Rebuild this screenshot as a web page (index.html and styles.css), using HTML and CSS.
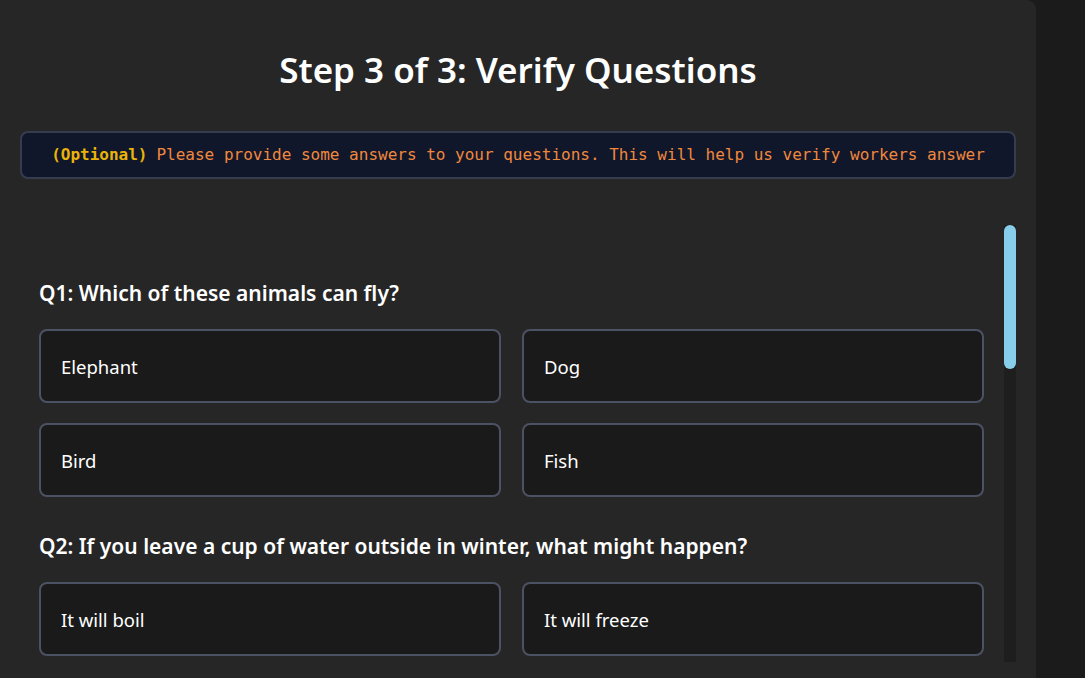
FILE: index.html
```html
<!DOCTYPE html>
<html lang="en">
<head>
<meta charset="utf-8">
<title>Verify Questions</title>
<link rel="stylesheet" href="styles.css">
</head>
<body>
<main class="card">
  <h1 class="title">Step 3 of 3: Verify Questions</h1>
  <div class="notice"><span class="notice-tag">(Optional)</span> Please provide some answers to your questions. This will help us verify workers answer</div>
  <div class="scroll-area">
    <div class="scroll-content">
      <section class="question">
        <h2 class="q-title">Q1: Which of these animals can fly?</h2>
        <div class="options">
          <button class="option">Elephant</button>
          <button class="option">Dog</button>
          <button class="option">Bird</button>
          <button class="option">Fish</button>
        </div>
      </section>
      <section class="question">
        <h2 class="q-title">Q2: If you leave a cup of water outside in winter, what might happen?</h2>
        <div class="options">
          <button class="option">It will boil</button>
          <button class="option">It will freeze</button>
        </div>
      </section>
    </div>
    <div class="scrollbar"><div class="thumb"></div></div>
  </div>
</main>
</body>
</html>
```
FILE: styles.css
```css
* { box-sizing: border-box; }
html, body { margin: 0; padding: 0; }
body {
  background: #1b1b1b;
  font-family: "Noto Sans", "Open Sans", sans-serif;
  color: #ffffff;
  height: 678px;
  overflow: hidden;
}
.card {
  width: 1036px;
  height: 678px;
  background: #262626;
  border-top-right-radius: 9px;
  padding: 48px 20px 0 20px;
  display: flex;
  flex-direction: column;
}
.title {
  margin: 0;
  text-align: center;
  font-size: 35px;
  line-height: 44px;
  font-weight: 600;
  color: #ffffff;
}
.notice {
  margin-top: 39px;
  height: 48px;
  border: 2px solid #343c4e;
  border-radius: 8px;
  background: #10172a;
  font-family: "DejaVu Sans Mono", "Liberation Mono", monospace;
  font-size: 16px;
  color: #f0883e;
  display: flex;
  align-items: center;
  justify-content: center;
  white-space: nowrap;
  overflow: hidden;
  padding-bottom: 1px;
}
.notice-tag {
  color: #eab308;
  font-weight: 700;
  margin-right: 9px;
}
.scroll-area {
  margin-top: 46px;
  height: 437px;
  display: flex;
}
.scroll-content {
  flex: 1;
  overflow: hidden;
  padding: 54px 20px 0 19px;
}
.scrollbar {
  width: 12px;
  height: 100%;
  background: #1e1e1e;
}
.thumb {
  width: 12px;
  height: 144px;
  background: #87ceeb;
  border-radius: 6px;
}
.question { margin-bottom: 35px; }
.q-title {
  margin: 0 0 22px 0;
  font-size: 21px;
  line-height: 28px;
  font-weight: 600;
  color: #ffffff;
}
.options {
  display: grid;
  grid-template-columns: 1fr 1fr;
  column-gap: 21px;
  row-gap: 20px;
}
.option {
  height: 74px;
  background: #1a1a1a;
  border: 2px solid #4b5263;
  border-radius: 8px;
  color: #ffffff;
  font-family: "Noto Sans", "Open Sans", sans-serif;
  font-size: 18.5px;
  text-align: left;
  padding: 0 20px;
}
```
